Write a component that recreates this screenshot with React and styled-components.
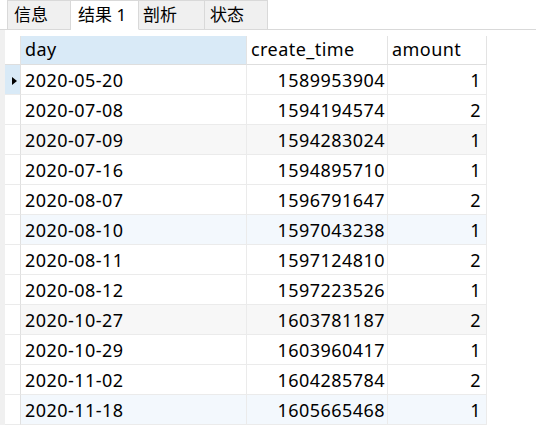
import React from "react";
import styled, { createGlobalStyle, css } from "styled-components";

const Global = createGlobalStyle`
  html, body { margin: 0; padding: 0; background: #ffffff; }
  body { font-family: "Noto Sans", "Noto Sans CJK SC", sans-serif; color: #000; }
  * { box-sizing: border-box; }
`;

const Page = styled.div`
  width: 536px;
  height: 435px;
  display: flex;
  flex-direction: column;
  overflow: hidden;
  background: #fff;
`;

const TabBar = styled.div`
  display: flex;
  align-items: flex-end;
  height: 30px;
  padding-left: 7px;
  border-bottom: 1px solid #d9d9d9;
`;

const Tab = styled.div`
  height: 30px;
  margin-bottom: -1px;
  width: ${(p) => p.$w}px;
  display: flex;
  align-items: center;
  justify-content: flex-start;
  font-family: "Noto Sans", "Noto Sans CJK SC", sans-serif;
  font-size: 17px;
  line-height: 1;
  padding: 0 0 1px ${(p) => p.$pl}px;
  border: 1px solid #d9d9d9;
  border-left-width: ${(p) => (p.$first ? 1 : 0)}px;
  background: ${(p) => (p.$active ? "#ffffff" : "#f0f0f0")};
  ${(p) =>
    p.$active &&
    css`
      border-bottom-color: #ffffff;
    `}
`;

const Body = styled.div`
  display: flex;
  align-items: flex-start;
`;

const Strip = styled.div`
  width: 5px;
  align-self: stretch;
  background: #f0f0f0;
`;

const Grid = styled.div`
  margin-top: 6px;
  display: grid;
  grid-template-columns: 16px 226px 141px 99px;
  font-size: 18px;
  letter-spacing: 0.45px;
`;

const HeadCell = styled.div`
  height: 29px;
  display: flex;
  align-items: center;
  padding: 0 4px 2px 4px;
  border-right: 1px solid #e3e3e3;
  border-bottom: 1px solid #dedede;
  background: ${(p) => (p.$sel ? "#d9eaf7" : "#ffffff")};
`;

const Cell = styled.div`
  height: 30px;
  display: flex;
  align-items: center;
  justify-content: ${(p) => (p.$right ? "flex-end" : "flex-start")};
  padding: 1px ${(p) => (p.$pr != null ? p.$pr : 4)}px 0 4px;
  border-right: 1px solid #ebebeb;
  border-bottom: 1px solid #ebebeb;
  background: ${(p) => p.$bg};
`;

const Indicator = styled.div`
  height: 30px;
  display: flex;
  align-items: center;
  justify-content: flex-end;
  padding-right: 3px;
  padding-top: 3px;
  border-right: 1px solid #e0e0e0;
  border-bottom: 1px solid #ebebeb;
  background: ${(p) => (p.$sel ? "#d9eaf7" : "#ffffff")};
`;

const Arrow = styled.span`
  width: 0;
  height: 0;
  border-top: 4.5px solid transparent;
  border-bottom: 4.5px solid transparent;
  border-left: 5px solid #000;
`;

const rows = [
  ["2020-05-20", "1589953904", "1"],
  ["2020-07-08", "1594194574", "2"],
  ["2020-07-09", "1594283024", "1"],
  ["2020-07-16", "1594895710", "1"],
  ["2020-08-07", "1596791647", "2"],
  ["2020-08-10", "1597043238", "1"],
  ["2020-08-11", "1597124810", "2"],
  ["2020-08-12", "1597223526", "1"],
  ["2020-10-27", "1603781187", "2"],
  ["2020-10-29", "1603960417", "1"],
  ["2020-11-02", "1604285784", "2"],
  ["2020-11-18", "1605665468", "1"],
];

const rowBg = (i) => {
  if (i % 6 === 2) return "#f7f7f7";
  if (i % 6 === 5) return "#f3f8fd";
  return "#ffffff";
};

const tabs = [
  { label: "信息", w: 64, pl: 6 },
  { label: "结果 1", w: 68, pl: 7, active: true },
  { label: "剖析", w: 66, pl: 4 },
  { label: "状态", w: 63, pl: 5 },
];

export default function App() {
  return (
    <Page>
      <Global />
      <TabBar>
        {tabs.map((t, i) => (
          <Tab key={t.label} $w={t.w} $pl={t.pl} $active={t.active} $first={i === 0}>
            {t.label}
          </Tab>
        ))}
      </TabBar>
      <Body>
        <Strip />
        <Grid>
          <HeadCell />
          <HeadCell $sel>day</HeadCell>
          <HeadCell>create_time</HeadCell>
          <HeadCell>amount</HeadCell>
          {rows.map((r, i) => (
            <React.Fragment key={r[0]}>
              <Indicator $sel={i === 0}>{i === 0 && <Arrow />}</Indicator>
              <Cell $bg={rowBg(i)}>{r[0]}</Cell>
              <Cell $bg={rowBg(i)} $right $pr={2}>
                {r[1]}
              </Cell>
              <Cell $bg={rowBg(i)} $right $pr={5}>
                {r[2]}
              </Cell>
            </React.Fragment>
          ))}
        </Grid>
      </Body>
    </Page>
  );
}
